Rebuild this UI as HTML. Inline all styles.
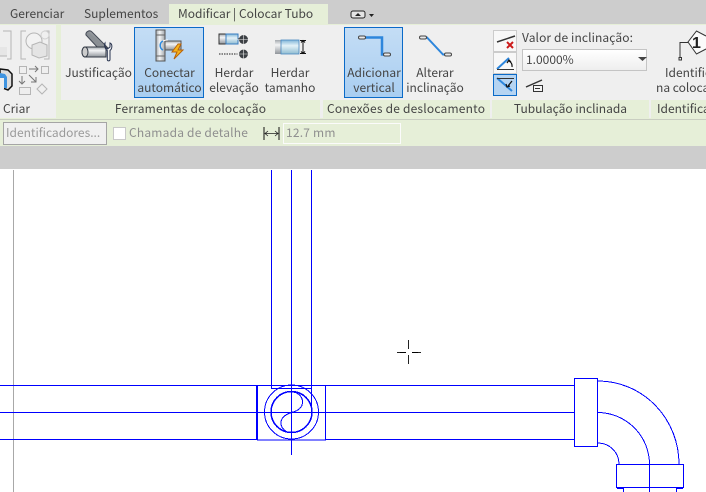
<!DOCTYPE html>
<html><head><meta charset="utf-8"><style>
html,body{margin:0;padding:0}
body{width:706px;height:492px;overflow:hidden;background:#fff;position:relative;font-family:"Noto Sans CJK TC","Liberation Sans",sans-serif;font-size:12px;color:#444}
.a{position:absolute}
.t{position:absolute;white-space:nowrap;line-height:16px;height:16px}
.s{letter-spacing:.2px}
.c{text-align:center}
svg{position:absolute;left:0;top:0}
</style></head><body>
<div class="a" style="left:0;top:0;width:706px;height:24px;background:#cdcdcd"></div>
<div class="a" style="left:169px;top:4px;width:159px;height:20px;background:#e6efd8"></div>
<div class="a" style="left:0;top:24px;width:706px;height:95px;background:#e6efd8"></div>
<div class="a" style="left:0;top:25px;width:56px;height:93px;background:#efefef"></div>
<div class="a" style="left:61px;top:25px;width:259px;height:75px;background:#efefef"></div>
<div class="a" style="left:323px;top:25px;width:167px;height:75px;background:#efefef"></div>
<div class="a" style="left:492px;top:25px;width:157px;height:75px;background:#efefef"></div>
<div class="a" style="left:651px;top:25px;width:55px;height:75px;background:#efefef"></div>
<div class="a" style="left:320px;top:25px;width:3px;height:93px;background:#efefef"></div>
<div class="a" style="left:490px;top:25px;width:2px;height:93px;background:#efefef"></div>
<div class="a" style="left:649px;top:25px;width:2px;height:93px;background:#efefef"></div>
<div class="a" style="left:0;top:119px;width:706px;height:1px;background:#c9cec1"></div>
<div class="a" style="left:0;top:120px;width:706px;height:26px;background:#e6efd8"></div>
<div class="a" style="left:0;top:146px;width:706px;height:23px;background:#cdcdcd"></div>

<div class="a" style="left:134px;top:27px;width:68px;height:69px;border:1.5px solid #0a6ac8;background:linear-gradient(#c4ddf5,#a9cef1)"></div>
<div class="a" style="left:344px;top:27px;width:57px;height:69px;border:1.5px solid #0a6ac8;background:linear-gradient(#c4ddf5,#a9cef1)"></div>
<div class="a" style="left:493px;top:30px;width:22px;height:20px;border:1px solid #ccc;background:#f8f8f8"></div>
<div class="a" style="left:493px;top:52px;width:22px;height:20px;border:1px solid #ccc;background:#f8f8f8"></div>
<div class="a" style="left:493px;top:74px;width:22px;height:20px;border:1px solid #0a6ac8;background:#b5d4f2"></div>
<div class="a" style="left:522px;top:49px;width:123px;height:20px;border:1px solid #c4c4c4;background:linear-gradient(#fff,#eee)"></div>
<div class="a" style="left:3px;top:122px;width:102px;height:21px;border:1px solid #a5a5a5;background:#f0f0f0"></div>
<div class="a" style="left:113px;top:127px;width:11px;height:11px;border:1px solid #c8c8c8;background:#fff"></div>
<div class="a" style="left:283px;top:123px;width:116px;height:19px;border:1px solid #fbfbfb;background:#e6efd8"></div>

<div class="t" style="left:10px;top:6px">Gerenciar</div>
<div class="t" style="left:84px;top:6px">Suplementos</div>
<div class="t" style="left:178px;top:6px">Modificar | Colocar Tubo</div>
<div class="t" style="left:3px;top:101px">Criar</div>
<div class="t c" style="left:61px;top:65px;width:75px">Justificação</div>
<div class="t c" style="left:134px;top:65px;width:71px">Conectar</div>
<div class="t c" style="left:134px;top:80px;width:71px">automático</div>
<div class="t c" style="left:204px;top:65px;width:60px">Herdar</div>
<div class="t c" style="left:204px;top:80px;width:60px">elevação</div>
<div class="t c" style="left:260px;top:65px;width:60px">Herdar</div>
<div class="t c" style="left:260px;top:80px;width:60px">tamanho</div>
<div class="t c" style="left:344px;top:65px;width:60px">Adicionar</div>
<div class="t c" style="left:344px;top:80px;width:60px">vertical</div>
<div class="t c" style="left:405px;top:65px;width:60px">Alterar</div>
<div class="t c" style="left:405px;top:80px;width:60px">inclinação</div>
<div class="t c s" style="left:61px;top:101px;width:259px">Ferramentas de colocação</div>
<div class="t s" style="left:327px;top:101px">Conexões de deslocamento</div>
<div class="t c" style="left:492px;top:101px;width:157px">Tubulação inclinada</div>
<div class="t" style="left:657px;top:101px">Identificação</div>
<div class="t" style="left:522px;top:30px;letter-spacing:.1px">Valor de inclinação:</div>
<div class="t" style="left:526px;top:52px">1.0000%</div>
<div class="t" style="left:665px;top:65px">Identificar</div>
<div class="t" style="left:656px;top:80px">na colocação</div>
<div class="t" style="left:6px;top:125px;color:#9a9a9a">Identificadores...</div>
<div class="t s" style="left:129px;top:125px;color:#8f8f8f">Chamada de detalhe</div>
<div class="t s" style="left:286px;top:125px;color:#8f8f8f">12.7 mm</div>

<svg width="706" height="492" viewBox="0 0 706 492" fill="none">
<defs>
<linearGradient id="p" x1="0" y1="0" x2="0" y2="1"><stop offset="0" stop-color="#a4a9ae"/><stop offset=".35" stop-color="#f4f5f6"/><stop offset="1" stop-color="#8f949a"/></linearGradient>
<linearGradient id="q" x1="0" y1="0" x2="1" y2="0"><stop offset="0" stop-color="#a4a9ae"/><stop offset=".4" stop-color="#f4f5f6"/><stop offset="1" stop-color="#a0a5aa"/></linearGradient>
<linearGradient id="d" x1="0" y1="0" x2="1" y2="-1"><stop offset="0" stop-color="#8a8f94"/><stop offset=".5" stop-color="#f0f2f4"/><stop offset="1" stop-color="#bfc3c7"/></linearGradient>
<linearGradient id="b" x1="0" y1="0" x2="0" y2="1"><stop offset="0" stop-color="#7fb5d8"/><stop offset=".4" stop-color="#e4f2f8"/><stop offset="1" stop-color="#8fbcd2"/></linearGradient>
</defs>
<!-- tab overflow icon -->
<rect x="351" y="11" width="14" height="7" rx="2" fill="#e4e4e4" stroke="#222"/><path d="M355 16h6l-3-3z" fill="#222"/><path d="M369 14h5l-2.500 3z" fill="#222"/>
<!-- criar icons -->
<g stroke="#b5b5b5" stroke-width="1">
<path d="M3 31h8v28h-4"/>
<path d="M26 31h-5v28h5M44 31h5v28h-5"/>
<circle cx="34" cy="41" r="8" fill="#f2f2f2"/><path d="M32 45l8-3 7 3v11l-8 2-7-3z" fill="#e4e4e4"/>
<circle cx="45" cy="35" r="4" stroke="#d0d0d0"/>
<rect x="19.500" y="66.500" width="7" height="7"/><rect x="41.500" y="66.500" width="7" height="7"/>
<rect x="19.500" y="87.500" width="11" height="7" fill="#eee"/><path d="M42 84l5 5-5 5-5-5z"/>
</g>
<path d="M29 69h9M35 66l3 3-3 3M22 76v8M19 81l3 3 3-3M29 75l7 7M36 77v5h-5" stroke="#777"/>
<path d="M0 69l8 1 4 4v12l-4 4-8-3z" fill="#ddd" stroke="#111" stroke-width="1.500"/><path d="M0 73l5 1 2 3v11h-7z" fill="#3f94e0"/><path d="M0 78l4 0v11h-4z" fill="#eee"/>
<rect x="0" y="47" width="7" height="9" fill="#e6e6e6"/><path d="M0 56h7" stroke="#b5b5b5"/>
<!-- justificação -->
<path d="M86 35a3.500 3.500 0 0 1 6-3l16 16-6 1h-3z" fill="url(#d)" stroke="#444a55"/>
<path d="M85 47h21v10h-21a3 5 0 0 1 0-10z" fill="url(#p)" stroke="#333a45"/>
<ellipse cx="85" cy="52" rx="3" ry="5" fill="#ccc" stroke="#333a45"/>
<path d="M105 43v4l2.500 2 2.500-2v-4c2.500 1 2.500 5.500 0 7.500v9a1.300 1.300 0 0 1-2.700 0v-9c-3-2-3-6.500-2.300-7.500z" fill="#f4f4f4" stroke="#2a3550"/>
<!-- conectar -->
<rect x="156" y="30" width="9" height="31" fill="url(#q)" stroke="#555"/>
<path d="M156 35h9M156 56h9" stroke="#666"/>
<path d="M165 41h16v9h-16z" fill="url(#p)" stroke="#555"/>
<path d="M163 41a5 5 0 0 0 0 9" stroke="#2d8be0" stroke-width="1.500"/><path d="M163 41c2-1 3-1 5-1" stroke="#fff"/>
<path d="M178 44l-6 8h5l-3 7 9-9h-5l3-6z" fill="#f6b41c" stroke="#b8620a"/>
<!-- herdar elev -->
<rect x="219" y="34" width="7" height="10" fill="url(#p)" stroke="#333"/>
<rect x="226" y="34" width="12" height="10" fill="url(#b)" stroke="#3a7ec0"/>
<path d="M238 39h3M219 54h22" stroke="#222" stroke-dasharray="1.500 1"/>
<g fill="#3c4044"><circle cx="243.500" cy="39.500" r="4.500"/><circle cx="243.500" cy="54" r="4.500"/></g>
<path d="M243.500 33v13M237 39.500h13M243.500 47.500v13M237 54h13" stroke="#eee" stroke-width=".6"/>
<!-- herdar tamanho -->
<rect x="275" y="40" width="6" height="14" fill="url(#p)"/><rect x="281" y="40" width="18" height="14" fill="url(#b)" stroke="#4a88c0" stroke-width=".8"/>
<path d="M300 40.500h6M303 40v14M300 53.500h6M301 42.500l2-2 2 2M301 51.500l2 2 2-2" stroke="#111" stroke-width="1"/>
<!-- adicionar vertical -->
<path d="M364 37.500h18v17h3" stroke="#2d86dc" stroke-width="2.500"/>
<rect x="358.500" y="36" width="7" height="3" rx="1.500" fill="#e8e8e8" stroke="#444"/>
<rect x="383.500" y="53" width="7" height="3" rx="1.500" fill="#e8e8e8" stroke="#444"/>
<!-- alterar -->
<path d="M425 37.500h2l16 17h3" stroke="#2d86dc" stroke-width="2"/>
<rect x="419.500" y="36" width="7" height="3" rx="1.500" fill="#e8e8e8" stroke="#444"/>
<rect x="444.500" y="53" width="7" height="3" rx="1.500" fill="#e8e8e8" stroke="#444"/>
<!-- slope icons -->
<path d="M497 42l18-6" stroke="#333" stroke-width="1.500"/>
<path d="M507 42l6 6M513 42l-6 6" stroke="#cc1a1a" stroke-width="2"/>
<path d="M497 69l12-11" stroke="#2d86dc" stroke-width="2"/><path d="M497 69.500h17" stroke="#333"/>
<path d="M509 61a6 6 0 0 1 3 6M507 63l2-3 2 2" stroke="#111" stroke-width="1.200"/>
<path d="M497 78l15 13" stroke="#2d86dc" stroke-width="2"/><path d="M497 78.500h17" stroke="#333"/>
<path d="M512 81l-4 5M506 84l1 3 3-1" stroke="#111" stroke-width="1.200"/>
<path d="M526 87l16-7" stroke="#333" stroke-width="1.500"/><rect x="533.500" y="85.500" width="9" height="6" fill="#f4f4f4" stroke="#333"/><path d="M535 88.500h5" stroke="#333"/>
<path d="M638 57h9l-4.500 4z" fill="#444"/>
<!-- identificar -->
<path d="M688 42l8.500-11 9.500 5v13l-9.500 5.500z" fill="#fbfbfb"/>
<path d="M706 36l-9.500-5-8.500 11 8.500 12 9.500-5" stroke="#333"/>
<path d="M688 42.500h-8v15" stroke="#333"/><rect x="679" y="57.500" width="2.500" height="2.500" stroke="#333"/>
<text x="692" y="48" font-family="Liberation Sans,sans-serif" font-size="16" font-weight="bold" fill="#222">1</text>
<!-- options size icon -->
<path d="M264 127v13M279 127v13" stroke="#111"/><path d="M265 133.500h13M268 131l-3 2.500 3 2.500M275 131l3 2.500-3 2.500" stroke="#222" stroke-width=".8"/>

<!-- drawing -->
<path d="M13.500 170v322" stroke="#a8a8a8"/>
<g stroke="#0000ff" stroke-width="1" shape-rendering="crispEdges">
<path d="M271.500 170v218M311.500 170v218M291.500 170v285"/>
<path d="M0 385.500h257M326 385.500h248M0 412.500h574M0 439.500h257M326 439.500h248M257 412.500h70"/>
<rect x="257.500" y="385.500" width="68" height="54.500"/>
<path d="M256.500 385v55"/>
<path d="M271 388.500h41M311.500 388v24"/>
<circle cx="291.500" cy="412" r="27"/>
<circle cx="291.500" cy="412" r="20.500" stroke-width="1.500"/>
<path d="M291.500 392c6 0 11 4 11 10 0 6-5 9-11 10.500-6 2-11 5-10.500 11 0 4 3 6.500 5 8"/>
<rect x="574.500" y="378.500" width="23" height="68"/>
<path d="M598 381a81 83 0 0 1 81 83M598 412.500a52 52 0 0 1 51.500 51.500M598 443a21 21 0 0 1 21 21"/>
<rect x="616.500" y="464.500" width="67" height="23"/>
<path d="M649.500 464v28M623.500 488v4M676.500 488v4"/>
<path d="M617 488h7M676 488h7" stroke-width="2"/>
</g>
<!-- cursor -->
<path d="M397 352.500h9M412 352.500h9M408.500 340v9M408.500 355v9" stroke="#222"/>
<path d="M400 352.500h6M412 352.500h6" stroke="#000"/>
</svg>
</body></html>
